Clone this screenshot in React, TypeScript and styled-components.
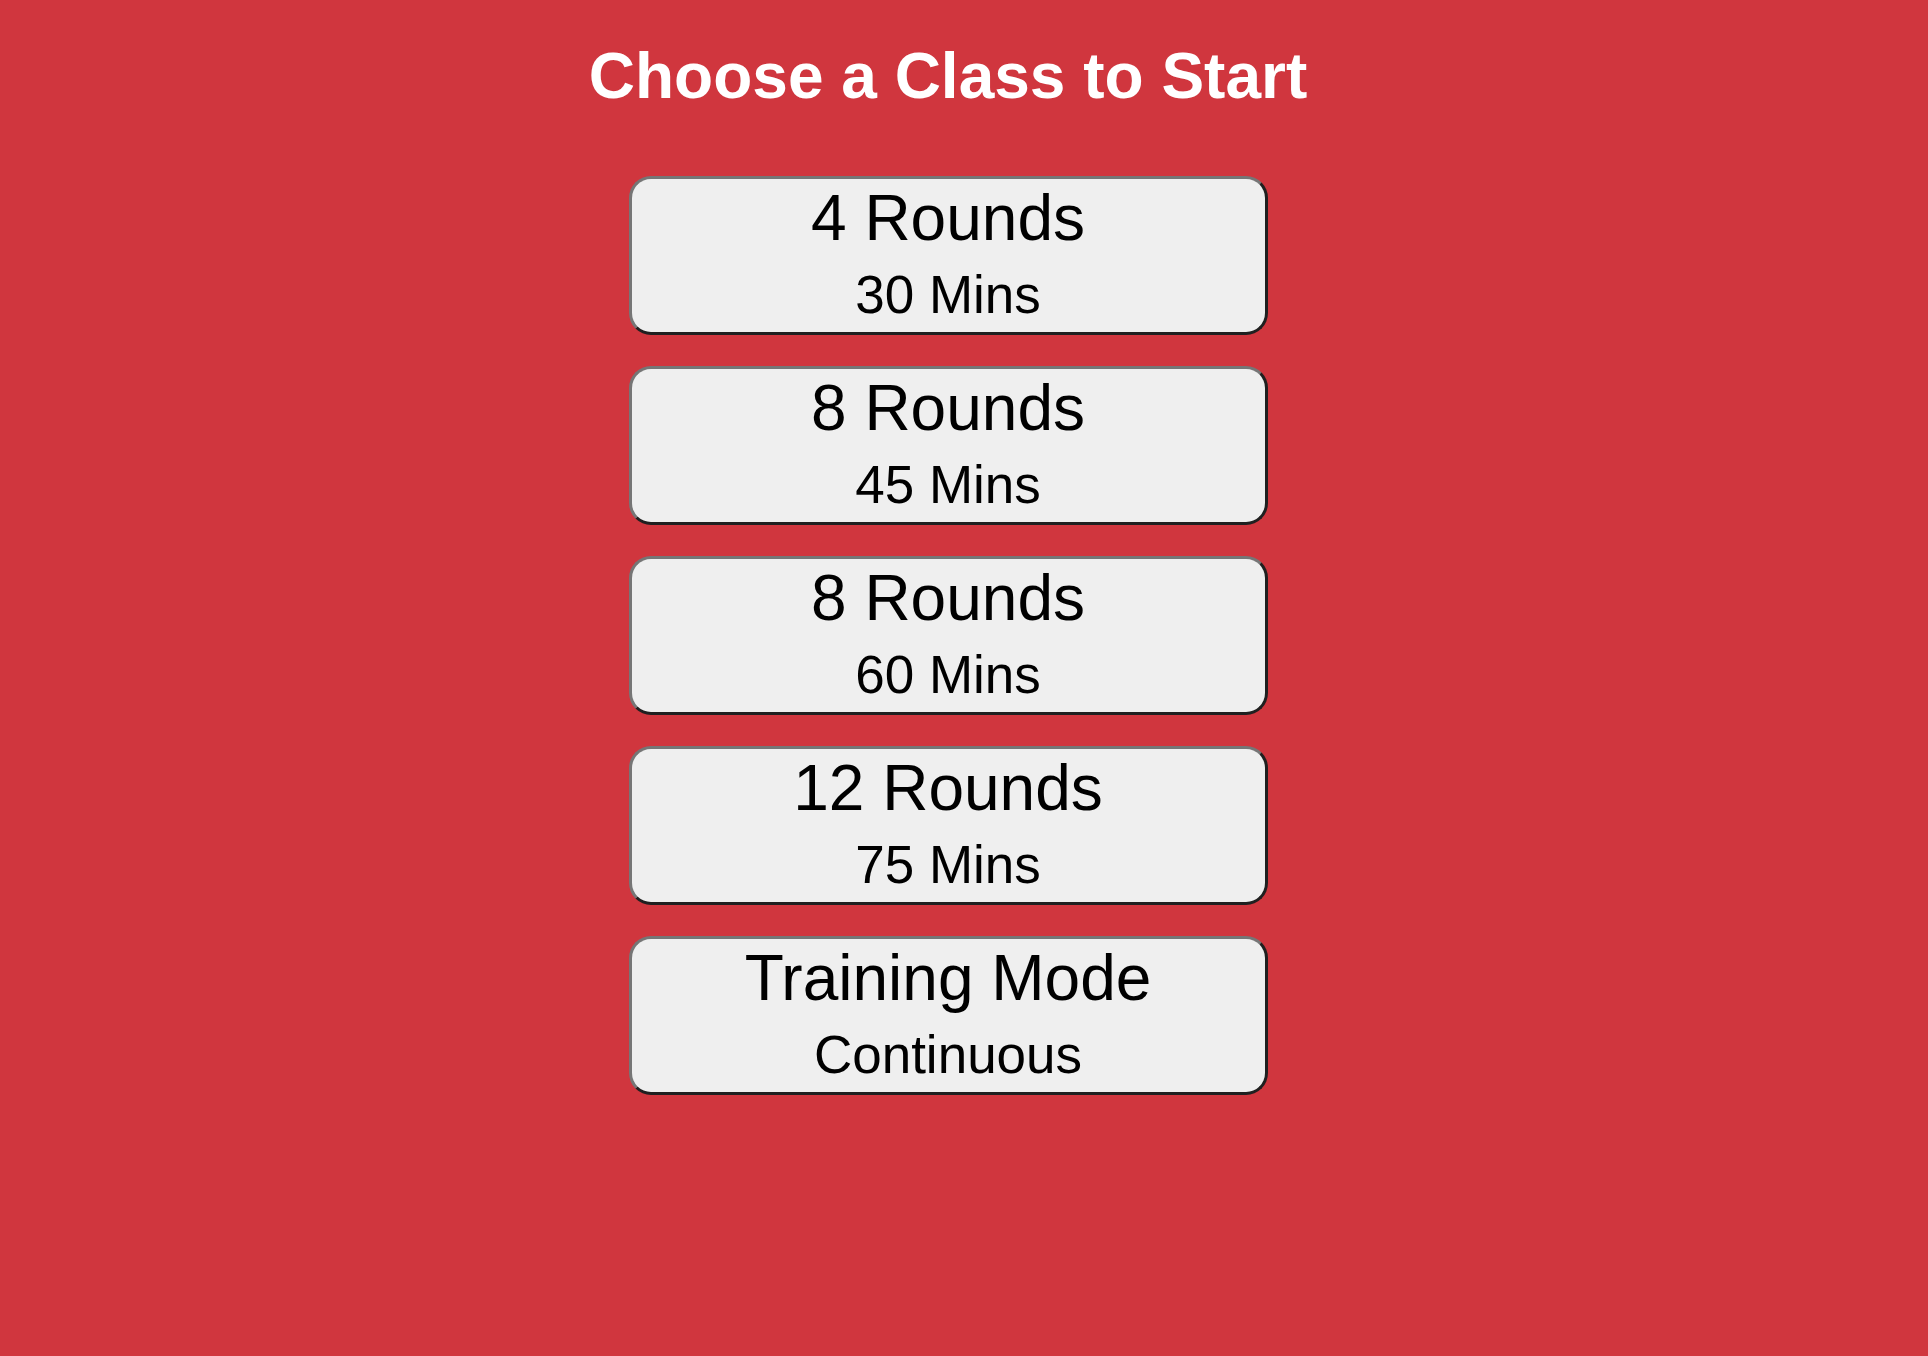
import React from "react";
import styled, { createGlobalStyle } from "styled-components";

const GlobalStyle = createGlobalStyle`
  html, body {
    margin: 0;
    padding: 0;
    background: #d0363e;
    min-height: 100%;
  }
  body {
    font-family: "Liberation Sans", Arial, Helvetica, sans-serif;
    min-height: 1356px;
  }
`;

const Page = styled.main`
  box-sizing: border-box;
  width: 100%;
  padding: 40px 32px 0 0;
  display: flex;
  flex-direction: column;
  align-items: center;
`;

const Title = styled.h1`
  margin: 0 0 62px;
  color: #ffffff;
  font-size: 64px;
  font-weight: 700;
  line-height: 1.15;
  text-align: center;
`;

const ClassList = styled.div`
  display: flex;
  flex-direction: column;
  gap: 31px;
`;

const ClassButton = styled.button`
  box-sizing: border-box;
  width: 639px;
  height: 159px;
  padding: 3px 0 0;
  display: flex;
  flex-direction: column;
  align-items: center;
  justify-content: flex-start;
  gap: 10px;
  background: #efefef;
  color: #000;
  border-width: 3px;
  border-style: solid;
  border-color: #767676 #202020 #202020 #767676;
  border-radius: 22px;
  font-family: "Liberation Sans", Arial, Helvetica, sans-serif;
  cursor: pointer;
`;

const Primary = styled.span`
  font-size: 64px;
  line-height: 1.15;
`;

const Secondary = styled.span`
  font-size: 53px;
  line-height: 1.15;
`;

const classes = [
  { title: "4 Rounds", sub: "30 Mins" },
  { title: "8 Rounds", sub: "45 Mins" },
  { title: "8 Rounds", sub: "60 Mins" },
  { title: "12 Rounds", sub: "75 Mins" },
  { title: "Training Mode", sub: "Continuous" },
];

export default function App() {
  return (
    <>
      <GlobalStyle />
      <Page>
        <Title>Choose a Class to Start</Title>
        <ClassList>
          {classes.map((c, i) => (
            <ClassButton key={i} type="button">
              <Primary>{c.title}</Primary>
              <Secondary>{c.sub}</Secondary>
            </ClassButton>
          ))}
        </ClassList>
      </Page>
    </>
  );
}
